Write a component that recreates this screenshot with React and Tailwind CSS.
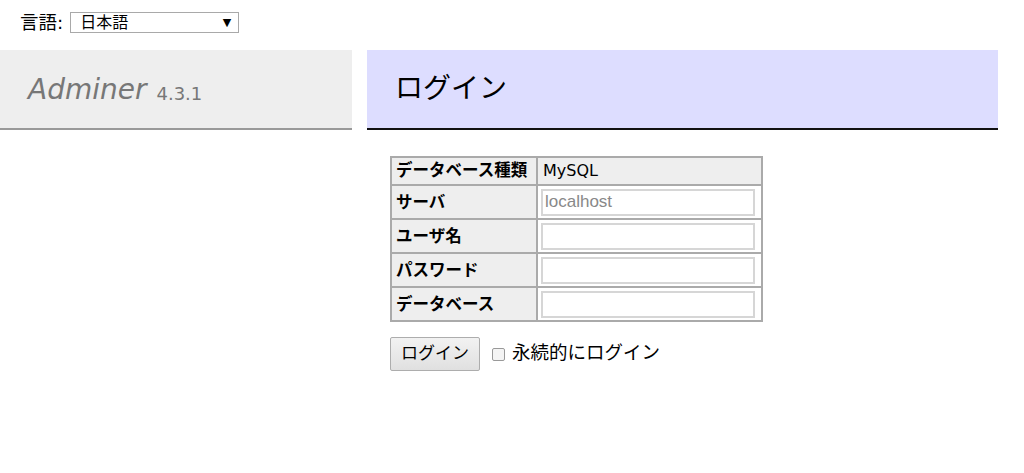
import React from 'react';

const JP = "font-['DejaVu_Sans','Noto_Sans_CJK_JP',sans-serif]";

const rows = [
    { label: 'サーバ', placeholder: 'localhost' },
    { label: 'ユーザ名' },
    { label: 'パスワード' },
    { label: 'データベース' },
];

const App = () => {
    return (
        <div className={`${JP} w-[1024px] h-[473px] bg-white text-black overflow-hidden`}>
            {/* language */}
            <div className="flex items-center h-[44px] pl-[20px] pt-[1px] text-[18.5px]">
                <span>言語:</span>
                <div className="ml-[7px] flex items-center justify-between w-[169px] h-[21px] border border-[#a9a9a9] pl-[9px] pr-[7px] text-[16px] leading-none">
                    <span>日本語</span>
                    <span className="text-[11px]">▼</span>
                </div>
            </div>

            <div className="mt-[6px] flex">
                {/* side */}
                <div className="w-[352px] h-[80px] bg-[#eee] border-b-2 border-[#999] flex items-center pl-[28px] pt-[2px]">
                    <span className="italic text-[28px] text-[#777]">Adminer</span>
                    <span className="ml-[10px] mt-[6px] text-[18px] text-[#777]">4.3.1</span>
                </div>

                {/* content */}
                <div className="ml-[15px] flex-1 mr-[26px]">
                    <div className="h-[80px] bg-[#ddf] border-b-2 border-[#111] flex items-center pl-[28px]">
                        <h1 className="text-[28px] font-normal">ログイン</h1>
                    </div>

                    <div className="ml-[23px] mt-[26px]">
                        <table className="border-collapse border-2 border-[#aaa]">
                            <tbody>
                                <tr className="h-[28px]">
                                    <th className="w-[146px] bg-[#eee] border-2 border-[#aaa] text-left font-bold text-[16.5px] px-[4px] whitespace-nowrap">データベース種類</th>
                                    <td className="w-[225px] bg-[#eee] border-2 border-[#aaa] text-[16px] px-[5px]">MySQL</td>
                                </tr>
                                {rows.map((r) => (
                                    <tr key={r.label} className="h-[34px]">
                                        <th className="bg-[#eee] border-2 border-[#aaa] text-left font-bold text-[16.5px] px-[4px] pt-[2px] whitespace-nowrap">{r.label}</th>
                                        <td className="border-2 border-[#aaa] px-[3px]">
                                            <input
                                                placeholder={r.placeholder}
                                                className="block w-[214px] h-[27px] border-2 border-[#d6d6d6] px-[2px] font-['Liberation_Sans',sans-serif] text-[17px] placeholder:text-[#888] outline-none"
                                            />
                                        </td>
                                    </tr>
                                ))}
                            </tbody>
                        </table>

                        <div className="mt-[15px] flex items-center">
                            <button className="w-[90px] h-[34px] border border-[#adadad] rounded-[2px] bg-gradient-to-b from-[#f2f2f2] to-[#e0e0e0] text-[17px]">
                                ログイン
                            </button>
                            <span className="ml-[12px] w-[13px] h-[13px] border border-[#999] rounded-[2px] bg-[#f4f4f4]" />
                            <span className="ml-[7px] text-[18.5px] mb-[2px]">永続的にログイン</span>
                        </div>
                    </div>
                </div>
            </div>
        </div>
    );
};

export default App;
